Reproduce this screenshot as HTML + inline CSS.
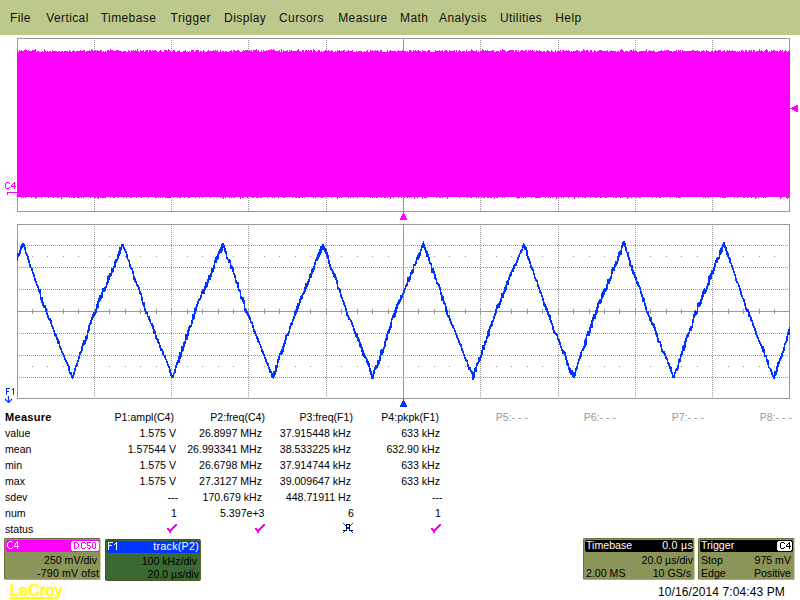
<!DOCTYPE html><html><head><meta charset="utf-8"><style>
html,body{margin:0;padding:0;width:800px;height:600px;overflow:hidden;background:#fff;position:relative;font-family:"Liberation Sans",sans-serif}
.menu{position:absolute;left:0;top:0;width:800px;height:35px;background:#bdc98c}
.m{position:absolute;top:11px;font-size:12px;line-height:14px;color:#111;letter-spacing:0.4px}
.t{position:absolute;font-size:10.6px;line-height:14px;color:#000;white-space:nowrap}
.b{font-weight:bold;font-size:11px;letter-spacing:0.3px}
.g{color:#999}
.hd{position:absolute;border-radius:2px;height:12px}
.bt{position:absolute;font-size:10.6px;line-height:12px;white-space:nowrap}
.sm{position:absolute;font-size:9.6px;line-height:10px;white-space:nowrap;letter-spacing:0.4px;transform:scaleX(0.86);transform-origin:0 0}
</style></head><body>
<div class="menu"><span class="m" style="left:10.0px">File</span><span class="m" style="left:46.2px">Vertical</span><span class="m" style="left:100.8px">Timebase</span><span class="m" style="left:170.6px">Trigger</span><span class="m" style="left:224.1px">Display</span><span class="m" style="left:279.0px">Cursors</span><span class="m" style="left:338.2px">Measure</span><span class="m" style="left:400.0px">Math</span><span class="m" style="left:439.0px">Analysis</span><span class="m" style="left:500.0px">Utilities</span><span class="m" style="left:555.3px">Help</span></div>
<svg width="800" height="600" style="position:absolute;left:0;top:0" shape-rendering="crispEdges"><rect x="17" y="38" width="773" height="1" fill="#9a979c"/><rect x="17" y="211" width="773" height="1" fill="#9a979c"/><rect x="17" y="38" width="1" height="174" fill="#9a979c"/><rect x="789" y="38" width="1" height="174" fill="#9a979c"/><line x1="94.5" y1="40" x2="94.5" y2="211" stroke="#9a979c" stroke-width="1" stroke-dasharray="1 1"/><line x1="171.5" y1="40" x2="171.5" y2="211" stroke="#9a979c" stroke-width="1" stroke-dasharray="1 1"/><line x1="248.5" y1="40" x2="248.5" y2="211" stroke="#9a979c" stroke-width="1" stroke-dasharray="1 1"/><line x1="326.5" y1="40" x2="326.5" y2="211" stroke="#9a979c" stroke-width="1" stroke-dasharray="1 1"/><rect x="403" y="38" width="1" height="173" fill="#9a979c"/><line x1="480.5" y1="40" x2="480.5" y2="211" stroke="#9a979c" stroke-width="1" stroke-dasharray="1 1"/><line x1="558.5" y1="40" x2="558.5" y2="211" stroke="#9a979c" stroke-width="1" stroke-dasharray="1 1"/><line x1="635.5" y1="40" x2="635.5" y2="211" stroke="#9a979c" stroke-width="1" stroke-dasharray="1 1"/><line x1="712.5" y1="40" x2="712.5" y2="211" stroke="#9a979c" stroke-width="1" stroke-dasharray="1 1"/><rect x="32" y="122" width="1" height="5" fill="#9a979c"/><rect x="47" y="122" width="1" height="5" fill="#9a979c"/><rect x="63" y="122" width="1" height="5" fill="#9a979c"/><rect x="78" y="122" width="1" height="5" fill="#9a979c"/><rect x="94" y="121" width="1" height="7" fill="#9a979c"/><rect x="109" y="122" width="1" height="5" fill="#9a979c"/><rect x="125" y="122" width="1" height="5" fill="#9a979c"/><rect x="140" y="122" width="1" height="5" fill="#9a979c"/><rect x="156" y="122" width="1" height="5" fill="#9a979c"/><rect x="171" y="121" width="1" height="7" fill="#9a979c"/><rect x="187" y="122" width="1" height="5" fill="#9a979c"/><rect x="202" y="122" width="1" height="5" fill="#9a979c"/><rect x="218" y="122" width="1" height="5" fill="#9a979c"/><rect x="233" y="122" width="1" height="5" fill="#9a979c"/><rect x="248" y="121" width="1" height="7" fill="#9a979c"/><rect x="264" y="122" width="1" height="5" fill="#9a979c"/><rect x="279" y="122" width="1" height="5" fill="#9a979c"/><rect x="295" y="122" width="1" height="5" fill="#9a979c"/><rect x="310" y="122" width="1" height="5" fill="#9a979c"/><rect x="326" y="121" width="1" height="7" fill="#9a979c"/><rect x="341" y="122" width="1" height="5" fill="#9a979c"/><rect x="357" y="122" width="1" height="5" fill="#9a979c"/><rect x="372" y="122" width="1" height="5" fill="#9a979c"/><rect x="388" y="122" width="1" height="5" fill="#9a979c"/><rect x="403" y="121" width="1" height="7" fill="#9a979c"/><rect x="418" y="122" width="1" height="5" fill="#9a979c"/><rect x="434" y="122" width="1" height="5" fill="#9a979c"/><rect x="449" y="122" width="1" height="5" fill="#9a979c"/><rect x="465" y="122" width="1" height="5" fill="#9a979c"/><rect x="480" y="121" width="1" height="7" fill="#9a979c"/><rect x="496" y="122" width="1" height="5" fill="#9a979c"/><rect x="511" y="122" width="1" height="5" fill="#9a979c"/><rect x="527" y="122" width="1" height="5" fill="#9a979c"/><rect x="542" y="122" width="1" height="5" fill="#9a979c"/><rect x="558" y="121" width="1" height="7" fill="#9a979c"/><rect x="573" y="122" width="1" height="5" fill="#9a979c"/><rect x="589" y="122" width="1" height="5" fill="#9a979c"/><rect x="604" y="122" width="1" height="5" fill="#9a979c"/><rect x="619" y="122" width="1" height="5" fill="#9a979c"/><rect x="635" y="121" width="1" height="7" fill="#9a979c"/><rect x="650" y="122" width="1" height="5" fill="#9a979c"/><rect x="666" y="122" width="1" height="5" fill="#9a979c"/><rect x="681" y="122" width="1" height="5" fill="#9a979c"/><rect x="697" y="122" width="1" height="5" fill="#9a979c"/><rect x="712" y="121" width="1" height="7" fill="#9a979c"/><rect x="728" y="122" width="1" height="5" fill="#9a979c"/><rect x="743" y="122" width="1" height="5" fill="#9a979c"/><rect x="759" y="122" width="1" height="5" fill="#9a979c"/><rect x="774" y="122" width="1" height="5" fill="#9a979c"/><rect x="17" y="224" width="773" height="1" fill="#9a979c"/><rect x="17" y="398" width="773" height="1" fill="#9a979c"/><rect x="17" y="224" width="1" height="175" fill="#9a979c"/><rect x="789" y="224" width="1" height="175" fill="#9a979c"/><line x1="94.5" y1="226" x2="94.5" y2="398" stroke="#9a979c" stroke-width="1" stroke-dasharray="1 1"/><line x1="171.5" y1="226" x2="171.5" y2="398" stroke="#9a979c" stroke-width="1" stroke-dasharray="1 1"/><line x1="248.5" y1="226" x2="248.5" y2="398" stroke="#9a979c" stroke-width="1" stroke-dasharray="1 1"/><line x1="326.5" y1="226" x2="326.5" y2="398" stroke="#9a979c" stroke-width="1" stroke-dasharray="1 1"/><rect x="403" y="224" width="1" height="174" fill="#9a979c"/><line x1="480.5" y1="226" x2="480.5" y2="398" stroke="#9a979c" stroke-width="1" stroke-dasharray="1 1"/><line x1="558.5" y1="226" x2="558.5" y2="398" stroke="#9a979c" stroke-width="1" stroke-dasharray="1 1"/><line x1="635.5" y1="226" x2="635.5" y2="398" stroke="#9a979c" stroke-width="1" stroke-dasharray="1 1"/><line x1="712.5" y1="226" x2="712.5" y2="398" stroke="#9a979c" stroke-width="1" stroke-dasharray="1 1"/><line x1="19" y1="245.5" x2="789" y2="245.5" stroke="#9a979c" stroke-width="1" stroke-dasharray="1 1"/><line x1="19" y1="267.5" x2="789" y2="267.5" stroke="#9a979c" stroke-width="1" stroke-dasharray="1 1"/><line x1="19" y1="289.5" x2="789" y2="289.5" stroke="#9a979c" stroke-width="1" stroke-dasharray="1 1"/><rect x="17" y="311" width="772" height="1" fill="#9a979c"/><line x1="19" y1="333.5" x2="789" y2="333.5" stroke="#9a979c" stroke-width="1" stroke-dasharray="1 1"/><line x1="19" y1="355.5" x2="789" y2="355.5" stroke="#9a979c" stroke-width="1" stroke-dasharray="1 1"/><line x1="19" y1="377.5" x2="789" y2="377.5" stroke="#9a979c" stroke-width="1" stroke-dasharray="1 1"/><rect x="32" y="309" width="1" height="5" fill="#9a979c"/><rect x="47" y="309" width="1" height="5" fill="#9a979c"/><rect x="63" y="309" width="1" height="5" fill="#9a979c"/><rect x="78" y="309" width="1" height="5" fill="#9a979c"/><rect x="94" y="308" width="1" height="7" fill="#9a979c"/><rect x="109" y="309" width="1" height="5" fill="#9a979c"/><rect x="125" y="309" width="1" height="5" fill="#9a979c"/><rect x="140" y="309" width="1" height="5" fill="#9a979c"/><rect x="156" y="309" width="1" height="5" fill="#9a979c"/><rect x="171" y="308" width="1" height="7" fill="#9a979c"/><rect x="187" y="309" width="1" height="5" fill="#9a979c"/><rect x="202" y="309" width="1" height="5" fill="#9a979c"/><rect x="218" y="309" width="1" height="5" fill="#9a979c"/><rect x="233" y="309" width="1" height="5" fill="#9a979c"/><rect x="248" y="308" width="1" height="7" fill="#9a979c"/><rect x="264" y="309" width="1" height="5" fill="#9a979c"/><rect x="279" y="309" width="1" height="5" fill="#9a979c"/><rect x="295" y="309" width="1" height="5" fill="#9a979c"/><rect x="310" y="309" width="1" height="5" fill="#9a979c"/><rect x="326" y="308" width="1" height="7" fill="#9a979c"/><rect x="341" y="309" width="1" height="5" fill="#9a979c"/><rect x="357" y="309" width="1" height="5" fill="#9a979c"/><rect x="372" y="309" width="1" height="5" fill="#9a979c"/><rect x="388" y="309" width="1" height="5" fill="#9a979c"/><rect x="403" y="308" width="1" height="7" fill="#9a979c"/><rect x="418" y="309" width="1" height="5" fill="#9a979c"/><rect x="434" y="309" width="1" height="5" fill="#9a979c"/><rect x="449" y="309" width="1" height="5" fill="#9a979c"/><rect x="465" y="309" width="1" height="5" fill="#9a979c"/><rect x="480" y="308" width="1" height="7" fill="#9a979c"/><rect x="496" y="309" width="1" height="5" fill="#9a979c"/><rect x="511" y="309" width="1" height="5" fill="#9a979c"/><rect x="527" y="309" width="1" height="5" fill="#9a979c"/><rect x="542" y="309" width="1" height="5" fill="#9a979c"/><rect x="558" y="308" width="1" height="7" fill="#9a979c"/><rect x="573" y="309" width="1" height="5" fill="#9a979c"/><rect x="589" y="309" width="1" height="5" fill="#9a979c"/><rect x="604" y="309" width="1" height="5" fill="#9a979c"/><rect x="619" y="309" width="1" height="5" fill="#9a979c"/><rect x="635" y="308" width="1" height="7" fill="#9a979c"/><rect x="650" y="309" width="1" height="5" fill="#9a979c"/><rect x="666" y="309" width="1" height="5" fill="#9a979c"/><rect x="681" y="309" width="1" height="5" fill="#9a979c"/><rect x="697" y="309" width="1" height="5" fill="#9a979c"/><rect x="712" y="308" width="1" height="7" fill="#9a979c"/><rect x="728" y="309" width="1" height="5" fill="#9a979c"/><rect x="743" y="309" width="1" height="5" fill="#9a979c"/><rect x="759" y="309" width="1" height="5" fill="#9a979c"/><rect x="774" y="309" width="1" height="5" fill="#9a979c"/><rect x="32" y="256" width="1" height="1" fill="#9a979c"/><rect x="47" y="256" width="1" height="1" fill="#9a979c"/><rect x="63" y="256" width="1" height="1" fill="#9a979c"/><rect x="78" y="256" width="1" height="1" fill="#9a979c"/><rect x="109" y="256" width="1" height="1" fill="#9a979c"/><rect x="125" y="256" width="1" height="1" fill="#9a979c"/><rect x="140" y="256" width="1" height="1" fill="#9a979c"/><rect x="156" y="256" width="1" height="1" fill="#9a979c"/><rect x="187" y="256" width="1" height="1" fill="#9a979c"/><rect x="202" y="256" width="1" height="1" fill="#9a979c"/><rect x="218" y="256" width="1" height="1" fill="#9a979c"/><rect x="233" y="256" width="1" height="1" fill="#9a979c"/><rect x="264" y="256" width="1" height="1" fill="#9a979c"/><rect x="279" y="256" width="1" height="1" fill="#9a979c"/><rect x="295" y="256" width="1" height="1" fill="#9a979c"/><rect x="310" y="256" width="1" height="1" fill="#9a979c"/><rect x="341" y="256" width="1" height="1" fill="#9a979c"/><rect x="357" y="256" width="1" height="1" fill="#9a979c"/><rect x="372" y="256" width="1" height="1" fill="#9a979c"/><rect x="388" y="256" width="1" height="1" fill="#9a979c"/><rect x="418" y="256" width="1" height="1" fill="#9a979c"/><rect x="434" y="256" width="1" height="1" fill="#9a979c"/><rect x="449" y="256" width="1" height="1" fill="#9a979c"/><rect x="465" y="256" width="1" height="1" fill="#9a979c"/><rect x="496" y="256" width="1" height="1" fill="#9a979c"/><rect x="511" y="256" width="1" height="1" fill="#9a979c"/><rect x="527" y="256" width="1" height="1" fill="#9a979c"/><rect x="542" y="256" width="1" height="1" fill="#9a979c"/><rect x="573" y="256" width="1" height="1" fill="#9a979c"/><rect x="589" y="256" width="1" height="1" fill="#9a979c"/><rect x="604" y="256" width="1" height="1" fill="#9a979c"/><rect x="619" y="256" width="1" height="1" fill="#9a979c"/><rect x="650" y="256" width="1" height="1" fill="#9a979c"/><rect x="666" y="256" width="1" height="1" fill="#9a979c"/><rect x="681" y="256" width="1" height="1" fill="#9a979c"/><rect x="697" y="256" width="1" height="1" fill="#9a979c"/><rect x="728" y="256" width="1" height="1" fill="#9a979c"/><rect x="743" y="256" width="1" height="1" fill="#9a979c"/><rect x="759" y="256" width="1" height="1" fill="#9a979c"/><rect x="774" y="256" width="1" height="1" fill="#9a979c"/><rect x="32" y="366" width="1" height="1" fill="#9a979c"/><rect x="47" y="366" width="1" height="1" fill="#9a979c"/><rect x="63" y="366" width="1" height="1" fill="#9a979c"/><rect x="78" y="366" width="1" height="1" fill="#9a979c"/><rect x="109" y="366" width="1" height="1" fill="#9a979c"/><rect x="125" y="366" width="1" height="1" fill="#9a979c"/><rect x="140" y="366" width="1" height="1" fill="#9a979c"/><rect x="156" y="366" width="1" height="1" fill="#9a979c"/><rect x="187" y="366" width="1" height="1" fill="#9a979c"/><rect x="202" y="366" width="1" height="1" fill="#9a979c"/><rect x="218" y="366" width="1" height="1" fill="#9a979c"/><rect x="233" y="366" width="1" height="1" fill="#9a979c"/><rect x="264" y="366" width="1" height="1" fill="#9a979c"/><rect x="279" y="366" width="1" height="1" fill="#9a979c"/><rect x="295" y="366" width="1" height="1" fill="#9a979c"/><rect x="310" y="366" width="1" height="1" fill="#9a979c"/><rect x="341" y="366" width="1" height="1" fill="#9a979c"/><rect x="357" y="366" width="1" height="1" fill="#9a979c"/><rect x="372" y="366" width="1" height="1" fill="#9a979c"/><rect x="388" y="366" width="1" height="1" fill="#9a979c"/><rect x="418" y="366" width="1" height="1" fill="#9a979c"/><rect x="434" y="366" width="1" height="1" fill="#9a979c"/><rect x="449" y="366" width="1" height="1" fill="#9a979c"/><rect x="465" y="366" width="1" height="1" fill="#9a979c"/><rect x="496" y="366" width="1" height="1" fill="#9a979c"/><rect x="511" y="366" width="1" height="1" fill="#9a979c"/><rect x="527" y="366" width="1" height="1" fill="#9a979c"/><rect x="542" y="366" width="1" height="1" fill="#9a979c"/><rect x="573" y="366" width="1" height="1" fill="#9a979c"/><rect x="589" y="366" width="1" height="1" fill="#9a979c"/><rect x="604" y="366" width="1" height="1" fill="#9a979c"/><rect x="619" y="366" width="1" height="1" fill="#9a979c"/><rect x="650" y="366" width="1" height="1" fill="#9a979c"/><rect x="666" y="366" width="1" height="1" fill="#9a979c"/><rect x="681" y="366" width="1" height="1" fill="#9a979c"/><rect x="697" y="366" width="1" height="1" fill="#9a979c"/><rect x="728" y="366" width="1" height="1" fill="#9a979c"/><rect x="743" y="366" width="1" height="1" fill="#9a979c"/><rect x="759" y="366" width="1" height="1" fill="#9a979c"/><rect x="774" y="366" width="1" height="1" fill="#9a979c"/><path d="M17 50h1V197h-1zM18 52h1V197h-1zM19 50h1V197h-1zM20 51h1V197h-1zM21 50h1V198h-1zM22 51h1V197h-1zM23 51h1V198h-1zM24 50h1V197h-1zM25 49h1V198h-1zM26 50h1V197h-1zM27 51h1V197h-1zM28 50h1V197h-1zM29 51h1V197h-1zM30 51h1V197h-1zM31 51h1V198h-1zM32 50h1V197h-1zM33 50h1V197h-1zM34 50h1V197h-1zM35 49h1V199h-1zM36 52h1V198h-1zM37 51h1V197h-1zM38 51h1V197h-1zM39 52h1V197h-1zM40 52h1V197h-1zM41 52h1V198h-1zM42 51h1V197h-1zM43 52h1V197h-1zM44 49h1V197h-1zM45 51h1V197h-1zM46 52h1V197h-1zM47 51h1V197h-1zM48 52h1V198h-1zM49 51h1V197h-1zM50 51h1V197h-1zM51 52h1V197h-1zM52 50h1V197h-1zM53 51h1V198h-1zM54 51h1V197h-1zM55 51h1V197h-1zM56 51h1V197h-1zM57 52h1V198h-1zM58 51h1V198h-1zM59 51h1V197h-1zM60 52h1V197h-1zM61 51h1V199h-1zM62 51h1V197h-1zM63 52h1V197h-1zM64 51h1V197h-1zM65 51h1V197h-1zM66 51h1V197h-1zM67 51h1V197h-1zM68 52h1V197h-1zM69 50h1V198h-1zM70 51h1V197h-1zM71 52h1V198h-1zM72 51h1V197h-1zM73 50h1V198h-1zM74 51h1V198h-1zM75 52h1V197h-1zM76 51h1V197h-1zM77 51h1V198h-1zM78 51h1V198h-1zM79 51h1V198h-1zM80 50h1V197h-1zM81 51h1V198h-1zM82 51h1V197h-1zM83 50h1V198h-1zM84 50h1V197h-1zM85 52h1V197h-1zM86 51h1V197h-1zM87 51h1V197h-1zM88 51h1V197h-1zM89 50h1V197h-1zM90 51h1V198h-1zM91 49h1V197h-1zM92 50h1V197h-1zM93 51h1V197h-1zM94 51h1V198h-1zM95 50h1V198h-1zM96 51h1V197h-1zM97 50h1V198h-1zM98 51h1V199h-1zM99 51h1V197h-1zM100 50h1V198h-1zM101 50h1V198h-1zM102 52h1V198h-1zM103 51h1V198h-1zM104 52h1V198h-1zM105 51h1V198h-1zM106 52h1V197h-1zM107 50h1V197h-1zM108 50h1V197h-1zM109 51h1V197h-1zM110 49h1V198h-1zM111 50h1V197h-1zM112 50h1V197h-1zM113 51h1V198h-1zM114 51h1V198h-1zM115 51h1V197h-1zM116 50h1V197h-1zM117 50h1V197h-1zM118 50h1V198h-1zM119 51h1V197h-1zM120 51h1V197h-1zM121 51h1V197h-1zM122 52h1V197h-1zM123 51h1V198h-1zM124 51h1V197h-1zM125 51h1V197h-1zM126 52h1V198h-1zM127 52h1V197h-1zM128 50h1V197h-1zM129 51h1V197h-1zM130 52h1V198h-1zM131 50h1V198h-1zM132 51h1V197h-1zM133 50h1V197h-1zM134 51h1V197h-1zM135 50h1V197h-1zM136 51h1V198h-1zM137 49h1V197h-1zM138 51h1V197h-1zM139 52h1V197h-1zM140 50h1V197h-1zM141 51h1V198h-1zM142 51h1V197h-1zM143 50h1V197h-1zM144 52h1V197h-1zM145 51h1V197h-1zM146 50h1V197h-1zM147 50h1V197h-1zM148 52h1V198h-1zM149 50h1V197h-1zM150 50h1V197h-1zM151 51h1V197h-1zM152 50h1V197h-1zM153 51h1V197h-1zM154 50h1V197h-1zM155 50h1V198h-1zM156 51h1V198h-1zM157 52h1V197h-1zM158 52h1V198h-1zM159 51h1V197h-1zM160 50h1V198h-1zM161 51h1V197h-1zM162 52h1V198h-1zM163 52h1V197h-1zM164 50h1V197h-1zM165 50h1V198h-1zM166 50h1V198h-1zM167 51h1V198h-1zM168 49h1V198h-1zM169 50h1V198h-1zM170 51h1V198h-1zM171 52h1V197h-1zM172 51h1V197h-1zM173 50h1V198h-1zM174 50h1V197h-1zM175 52h1V197h-1zM176 52h1V197h-1zM177 51h1V198h-1zM178 51h1V197h-1zM179 50h1V198h-1zM180 52h1V198h-1zM181 52h1V197h-1zM182 52h1V197h-1zM183 51h1V197h-1zM184 51h1V198h-1zM185 50h1V197h-1zM186 52h1V197h-1zM187 51h1V197h-1zM188 52h1V198h-1zM189 51h1V198h-1zM190 52h1V197h-1zM191 50h1V197h-1zM192 50h1V197h-1zM193 50h1V197h-1zM194 52h1V197h-1zM195 51h1V198h-1zM196 50h1V197h-1zM197 50h1V197h-1zM198 50h1V197h-1zM199 52h1V198h-1zM200 51h1V197h-1zM201 51h1V197h-1zM202 52h1V198h-1zM203 50h1V197h-1zM204 51h1V197h-1zM205 52h1V197h-1zM206 52h1V197h-1zM207 51h1V197h-1zM208 50h1V197h-1zM209 51h1V197h-1zM210 51h1V198h-1zM211 51h1V197h-1zM212 51h1V197h-1zM213 50h1V197h-1zM214 51h1V197h-1zM215 50h1V197h-1zM216 51h1V197h-1zM217 50h1V197h-1zM218 52h1V197h-1zM219 52h1V197h-1zM220 50h1V198h-1zM221 52h1V197h-1zM222 51h1V198h-1zM223 51h1V199h-1zM224 52h1V197h-1zM225 51h1V198h-1zM226 51h1V197h-1zM227 52h1V197h-1zM228 52h1V197h-1zM229 51h1V198h-1zM230 51h1V197h-1zM231 50h1V198h-1zM232 52h1V197h-1zM233 50h1V198h-1zM234 50h1V198h-1zM235 51h1V197h-1zM236 51h1V197h-1zM237 50h1V197h-1zM238 50h1V197h-1zM239 51h1V197h-1zM240 52h1V199h-1zM241 52h1V197h-1zM242 51h1V198h-1zM243 50h1V198h-1zM244 51h1V197h-1zM245 50h1V197h-1zM246 50h1V197h-1zM247 50h1V198h-1zM248 51h1V197h-1zM249 50h1V197h-1zM250 51h1V197h-1zM251 50h1V197h-1zM252 52h1V198h-1zM253 50h1V198h-1zM254 50h1V197h-1zM255 50h1V197h-1zM256 49h1V198h-1zM257 51h1V198h-1zM258 50h1V198h-1zM259 52h1V197h-1zM260 52h1V198h-1zM261 50h1V198h-1zM262 52h1V197h-1zM263 50h1V197h-1zM264 51h1V197h-1zM265 51h1V197h-1zM266 50h1V197h-1zM267 51h1V198h-1zM268 50h1V197h-1zM269 50h1V197h-1zM270 50h1V197h-1zM271 49h1V197h-1zM272 50h1V198h-1zM273 49h1V197h-1zM274 50h1V198h-1zM275 51h1V197h-1zM276 51h1V197h-1zM277 51h1V197h-1zM278 51h1V198h-1zM279 50h1V197h-1zM280 52h1V197h-1zM281 49h1V197h-1zM282 52h1V197h-1zM283 50h1V198h-1zM284 51h1V198h-1zM285 51h1V197h-1zM286 51h1V197h-1zM287 50h1V197h-1zM288 52h1V197h-1zM289 50h1V197h-1zM290 51h1V197h-1zM291 50h1V197h-1zM292 51h1V198h-1zM293 51h1V197h-1zM294 51h1V197h-1zM295 51h1V198h-1zM296 51h1V198h-1zM297 50h1V197h-1zM298 49h1V198h-1zM299 51h1V198h-1zM300 51h1V197h-1zM301 52h1V197h-1zM302 50h1V198h-1zM303 50h1V197h-1zM304 52h1V198h-1zM305 50h1V197h-1zM306 50h1V197h-1zM307 51h1V197h-1zM308 50h1V197h-1zM309 51h1V197h-1zM310 50h1V197h-1zM311 50h1V197h-1zM312 52h1V197h-1zM313 49h1V198h-1zM314 50h1V197h-1zM315 51h1V198h-1zM316 52h1V197h-1zM317 51h1V197h-1zM318 50h1V197h-1zM319 50h1V197h-1zM320 52h1V197h-1zM321 51h1V198h-1zM322 52h1V198h-1zM323 51h1V197h-1zM324 51h1V197h-1zM325 50h1V197h-1zM326 50h1V197h-1zM327 51h1V197h-1zM328 50h1V197h-1zM329 51h1V197h-1zM330 51h1V197h-1zM331 50h1V198h-1zM332 51h1V197h-1zM333 52h1V197h-1zM334 52h1V197h-1zM335 51h1V197h-1zM336 52h1V197h-1zM337 50h1V199h-1zM338 51h1V197h-1zM339 50h1V198h-1zM340 51h1V197h-1zM341 51h1V198h-1zM342 51h1V197h-1zM343 50h1V197h-1zM344 50h1V197h-1zM345 52h1V197h-1zM346 51h1V197h-1zM347 51h1V197h-1zM348 50h1V198h-1zM349 51h1V197h-1zM350 51h1V198h-1zM351 51h1V197h-1zM352 50h1V197h-1zM353 52h1V198h-1zM354 52h1V197h-1zM355 52h1V197h-1zM356 51h1V197h-1zM357 52h1V198h-1zM358 51h1V197h-1zM359 51h1V197h-1zM360 51h1V197h-1zM361 51h1V197h-1zM362 52h1V197h-1zM363 52h1V197h-1zM364 51h1V198h-1zM365 52h1V197h-1zM366 51h1V197h-1zM367 50h1V197h-1zM368 52h1V197h-1zM369 52h1V197h-1zM370 50h1V198h-1zM371 51h1V197h-1zM372 50h1V198h-1zM373 51h1V197h-1zM374 51h1V198h-1zM375 50h1V197h-1zM376 51h1V198h-1zM377 50h1V198h-1zM378 51h1V197h-1zM379 52h1V197h-1zM380 50h1V197h-1zM381 50h1V198h-1zM382 52h1V197h-1zM383 52h1V197h-1zM384 52h1V198h-1zM385 52h1V198h-1zM386 52h1V197h-1zM387 50h1V198h-1zM388 52h1V197h-1zM389 51h1V197h-1zM390 50h1V199h-1zM391 51h1V197h-1zM392 51h1V197h-1zM393 51h1V198h-1zM394 51h1V197h-1zM395 51h1V197h-1zM396 52h1V197h-1zM397 51h1V197h-1zM398 50h1V198h-1zM399 51h1V197h-1zM400 51h1V197h-1zM401 51h1V198h-1zM402 50h1V197h-1zM403 51h1V197h-1zM404 51h1V198h-1zM405 51h1V197h-1zM406 52h1V197h-1zM407 51h1V198h-1zM408 52h1V197h-1zM409 50h1V198h-1zM410 50h1V197h-1zM411 51h1V198h-1zM412 52h1V197h-1zM413 50h1V197h-1zM414 51h1V199h-1zM415 50h1V197h-1zM416 51h1V197h-1zM417 51h1V198h-1zM418 50h1V197h-1zM419 51h1V197h-1zM420 51h1V197h-1zM421 52h1V197h-1zM422 50h1V199h-1zM423 51h1V197h-1zM424 51h1V198h-1zM425 51h1V198h-1zM426 52h1V198h-1zM427 51h1V197h-1zM428 50h1V197h-1zM429 50h1V197h-1zM430 52h1V197h-1zM431 52h1V197h-1zM432 52h1V197h-1zM433 52h1V197h-1zM434 52h1V197h-1zM435 50h1V197h-1zM436 51h1V198h-1zM437 51h1V197h-1zM438 51h1V197h-1zM439 50h1V198h-1zM440 51h1V198h-1zM441 51h1V197h-1zM442 50h1V198h-1zM443 52h1V197h-1zM444 51h1V197h-1zM445 50h1V197h-1zM446 50h1V197h-1zM447 51h1V199h-1zM448 52h1V197h-1zM449 50h1V197h-1zM450 51h1V197h-1zM451 51h1V197h-1zM452 51h1V197h-1zM453 51h1V197h-1zM454 50h1V197h-1zM455 52h1V197h-1zM456 50h1V197h-1zM457 52h1V197h-1zM458 51h1V197h-1zM459 50h1V198h-1zM460 51h1V197h-1zM461 52h1V197h-1zM462 51h1V197h-1zM463 51h1V197h-1zM464 51h1V197h-1zM465 52h1V197h-1zM466 50h1V197h-1zM467 52h1V198h-1zM468 51h1V197h-1zM469 51h1V197h-1zM470 51h1V198h-1zM471 49h1V198h-1zM472 50h1V197h-1zM473 51h1V197h-1zM474 51h1V197h-1zM475 51h1V197h-1zM476 50h1V198h-1zM477 52h1V197h-1zM478 51h1V198h-1zM479 52h1V197h-1zM480 51h1V197h-1zM481 51h1V198h-1zM482 49h1V197h-1zM483 50h1V198h-1zM484 51h1V198h-1zM485 50h1V197h-1zM486 51h1V197h-1zM487 50h1V198h-1zM488 51h1V198h-1zM489 51h1V197h-1zM490 51h1V198h-1zM491 51h1V198h-1zM492 50h1V197h-1zM493 50h1V197h-1zM494 52h1V199h-1zM495 52h1V197h-1zM496 51h1V198h-1zM497 51h1V198h-1zM498 51h1V197h-1zM499 52h1V197h-1zM500 50h1V197h-1zM501 51h1V197h-1zM502 49h1V198h-1zM503 50h1V197h-1zM504 50h1V198h-1zM505 51h1V197h-1zM506 52h1V197h-1zM507 51h1V197h-1zM508 51h1V197h-1zM509 50h1V197h-1zM510 50h1V197h-1zM511 50h1V197h-1zM512 50h1V197h-1zM513 50h1V197h-1zM514 52h1V197h-1zM515 50h1V197h-1zM516 50h1V198h-1zM517 52h1V198h-1zM518 50h1V199h-1zM519 52h1V198h-1zM520 51h1V197h-1zM521 50h1V198h-1zM522 50h1V197h-1zM523 51h1V198h-1zM524 51h1V197h-1zM525 50h1V198h-1zM526 50h1V197h-1zM527 52h1V197h-1zM528 50h1V197h-1zM529 51h1V197h-1zM530 50h1V197h-1zM531 51h1V198h-1zM532 50h1V197h-1zM533 51h1V197h-1zM534 51h1V197h-1zM535 52h1V198h-1zM536 50h1V198h-1zM537 51h1V198h-1zM538 51h1V198h-1zM539 50h1V198h-1zM540 51h1V198h-1zM541 51h1V197h-1zM542 52h1V197h-1zM543 51h1V197h-1zM544 51h1V197h-1zM545 52h1V198h-1zM546 51h1V197h-1zM547 50h1V197h-1zM548 51h1V198h-1zM549 51h1V197h-1zM550 52h1V198h-1zM551 50h1V197h-1zM552 51h1V198h-1zM553 52h1V197h-1zM554 52h1V197h-1zM555 50h1V197h-1zM556 52h1V199h-1zM557 51h1V197h-1zM558 51h1V198h-1zM559 51h1V197h-1zM560 50h1V197h-1zM561 52h1V198h-1zM562 50h1V197h-1zM563 50h1V198h-1zM564 51h1V197h-1zM565 51h1V197h-1zM566 50h1V197h-1zM567 51h1V197h-1zM568 50h1V198h-1zM569 51h1V197h-1zM570 52h1V197h-1zM571 51h1V197h-1zM572 52h1V197h-1zM573 51h1V197h-1zM574 51h1V199h-1zM575 51h1V197h-1zM576 50h1V197h-1zM577 50h1V197h-1zM578 51h1V198h-1zM579 51h1V197h-1zM580 52h1V197h-1zM581 51h1V197h-1zM582 51h1V198h-1zM583 49h1V197h-1zM584 50h1V198h-1zM585 51h1V198h-1zM586 50h1V197h-1zM587 50h1V197h-1zM588 51h1V197h-1zM589 52h1V197h-1zM590 50h1V198h-1zM591 50h1V197h-1zM592 52h1V197h-1zM593 52h1V197h-1zM594 50h1V197h-1zM595 51h1V198h-1zM596 52h1V198h-1zM597 51h1V197h-1zM598 51h1V197h-1zM599 50h1V197h-1zM600 50h1V198h-1zM601 50h1V198h-1zM602 51h1V197h-1zM603 51h1V197h-1zM604 51h1V197h-1zM605 51h1V198h-1zM606 51h1V198h-1zM607 50h1V197h-1zM608 52h1V197h-1zM609 51h1V197h-1zM610 51h1V197h-1zM611 50h1V197h-1zM612 51h1V197h-1zM613 51h1V198h-1zM614 51h1V197h-1zM615 51h1V198h-1zM616 52h1V198h-1zM617 51h1V197h-1zM618 51h1V197h-1zM619 52h1V197h-1zM620 50h1V198h-1zM621 49h1V197h-1zM622 50h1V198h-1zM623 51h1V197h-1zM624 52h1V197h-1zM625 51h1V197h-1zM626 51h1V197h-1zM627 51h1V199h-1zM628 52h1V198h-1zM629 51h1V197h-1zM630 50h1V197h-1zM631 50h1V198h-1zM632 51h1V197h-1zM633 49h1V197h-1zM634 51h1V197h-1zM635 50h1V197h-1zM636 51h1V198h-1zM637 52h1V197h-1zM638 52h1V197h-1zM639 51h1V198h-1zM640 51h1V198h-1zM641 51h1V197h-1zM642 51h1V197h-1zM643 51h1V197h-1zM644 51h1V197h-1zM645 51h1V197h-1zM646 49h1V197h-1zM647 52h1V197h-1zM648 51h1V197h-1zM649 50h1V197h-1zM650 51h1V197h-1zM651 51h1V197h-1zM652 51h1V198h-1zM653 50h1V197h-1zM654 51h1V197h-1zM655 52h1V197h-1zM656 52h1V198h-1zM657 52h1V197h-1zM658 51h1V197h-1zM659 51h1V198h-1zM660 51h1V198h-1zM661 50h1V197h-1zM662 51h1V197h-1zM663 51h1V197h-1zM664 50h1V197h-1zM665 51h1V197h-1zM666 50h1V197h-1zM667 50h1V197h-1zM668 50h1V197h-1zM669 51h1V197h-1zM670 51h1V198h-1zM671 51h1V197h-1zM672 52h1V197h-1zM673 51h1V197h-1zM674 51h1V197h-1zM675 51h1V197h-1zM676 50h1V198h-1zM677 52h1V197h-1zM678 50h1V198h-1zM679 51h1V198h-1zM680 50h1V198h-1zM681 52h1V197h-1zM682 50h1V197h-1zM683 51h1V197h-1zM684 51h1V197h-1zM685 51h1V197h-1zM686 51h1V197h-1zM687 51h1V197h-1zM688 51h1V197h-1zM689 51h1V197h-1zM690 51h1V197h-1zM691 51h1V197h-1zM692 50h1V197h-1zM693 50h1V197h-1zM694 51h1V197h-1zM695 51h1V197h-1zM696 51h1V197h-1zM697 50h1V197h-1zM698 51h1V197h-1zM699 51h1V197h-1zM700 52h1V197h-1zM701 51h1V197h-1zM702 51h1V197h-1zM703 50h1V198h-1zM704 51h1V197h-1zM705 52h1V198h-1zM706 50h1V197h-1zM707 51h1V197h-1zM708 51h1V198h-1zM709 52h1V197h-1zM710 52h1V197h-1zM711 51h1V197h-1zM712 51h1V197h-1zM713 52h1V197h-1zM714 51h1V197h-1zM715 50h1V197h-1zM716 51h1V197h-1zM717 51h1V197h-1zM718 50h1V197h-1zM719 50h1V197h-1zM720 50h1V198h-1zM721 52h1V197h-1zM722 51h1V198h-1zM723 51h1V198h-1zM724 50h1V198h-1zM725 52h1V198h-1zM726 51h1V197h-1zM727 50h1V197h-1zM728 51h1V197h-1zM729 50h1V197h-1zM730 51h1V197h-1zM731 51h1V197h-1zM732 50h1V197h-1zM733 51h1V197h-1zM734 51h1V198h-1zM735 51h1V197h-1zM736 52h1V197h-1zM737 51h1V198h-1zM738 52h1V197h-1zM739 51h1V197h-1zM740 52h1V197h-1zM741 50h1V197h-1zM742 50h1V197h-1zM743 51h1V198h-1zM744 52h1V198h-1zM745 50h1V197h-1zM746 50h1V197h-1zM747 52h1V198h-1zM748 51h1V197h-1zM749 50h1V197h-1zM750 51h1V197h-1zM751 50h1V198h-1zM752 52h1V197h-1zM753 50h1V197h-1zM754 50h1V197h-1zM755 52h1V199h-1zM756 51h1V198h-1zM757 51h1V197h-1zM758 51h1V198h-1zM759 49h1V197h-1zM760 51h1V197h-1zM761 50h1V197h-1zM762 51h1V197h-1zM763 52h1V198h-1zM764 51h1V197h-1zM765 50h1V198h-1zM766 49h1V197h-1zM767 50h1V197h-1zM768 52h1V197h-1zM769 51h1V197h-1zM770 52h1V197h-1zM771 50h1V197h-1zM772 51h1V197h-1zM773 50h1V197h-1zM774 50h1V197h-1zM775 51h1V197h-1zM776 51h1V197h-1zM777 51h1V197h-1zM778 52h1V197h-1zM779 51h1V197h-1zM780 50h1V199h-1zM781 51h1V198h-1zM782 50h1V197h-1zM783 52h1V197h-1zM784 51h1V197h-1zM785 50h1V197h-1zM786 51h1V198h-1zM787 52h1V199h-1zM788 51h1V198h-1zM789 50h1V197h-1z" fill="#ff00ff"/><path d="M17 253h1V261h-1zM18 253h1V257h-1zM19 250h1V256h-1zM20 246h1V254h-1zM21 244h1V250h-1zM22 243h1V248h-1zM23 243h1V247h-1zM24 244h1V250h-1zM25 247h1V254h-1zM26 252h1V256h-1zM27 254h1V260h-1zM28 256h1V263h-1zM29 260h1V267h-1zM30 264h1V268h-1zM31 267h1V271h-1zM32 268h1V274h-1zM33 272h1V277h-1zM34 274h1V281h-1zM35 278h1V283h-1zM36 281h1V286h-1zM37 284h1V288h-1zM38 286h1V292h-1zM39 289h1V294h-1zM40 289h1V300h-1zM41 297h1V303h-1zM42 297h1V306h-1zM43 302h1V308h-1zM44 305h1V308h-1zM45 305h1V312h-1zM46 308h1V315h-1zM47 313h1V318h-1zM48 315h1V320h-1zM49 318h1V321h-1zM50 318h1V324h-1zM51 320h1V327h-1zM52 325h1V329h-1zM53 327h1V332h-1zM54 330h1V336h-1zM55 333h1V337h-1zM56 334h1V340h-1zM57 337h1V344h-1zM58 339h1V344h-1zM59 341h1V348h-1zM60 346h1V350h-1zM61 348h1V353h-1zM62 351h1V355h-1zM63 353h1V357h-1zM64 355h1V360h-1zM65 358h1V362h-1zM66 360h1V364h-1zM67 362h1V366h-1zM68 364h1V371h-1zM69 366h1V374h-1zM70 372h1V375h-1zM71 372h1V378h-1zM72 375h1V379h-1zM73 372h1V378h-1zM74 368h1V375h-1zM75 365h1V371h-1zM76 363h1V367h-1zM77 360h1V366h-1zM78 356h1V362h-1zM79 352h1V359h-1zM80 351h1V355h-1zM81 346h1V353h-1zM82 343h1V351h-1zM83 340h1V346h-1zM84 340h1V345h-1zM85 336h1V344h-1zM86 335h1V341h-1zM87 330h1V339h-1zM88 325h1V333h-1zM89 323h1V331h-1zM90 320h1V325h-1zM91 317h1V324h-1zM92 314h1V320h-1zM93 312h1V318h-1zM94 312h1V316h-1zM95 309h1V315h-1zM96 304h1V313h-1zM97 301h1V309h-1zM98 298h1V308h-1zM99 295h1V302h-1zM100 295h1V301h-1zM101 292h1V299h-1zM102 288h1V298h-1zM103 288h1V292h-1zM104 287h1V292h-1zM105 286h1V291h-1zM106 282h1V288h-1zM107 276h1V285h-1zM108 275h1V283h-1zM109 273h1V280h-1zM110 273h1V277h-1zM111 268h1V276h-1zM112 268h1V273h-1zM113 266h1V272h-1zM114 261h1V268h-1zM115 259h1V267h-1zM116 259h1V263h-1zM117 254h1V261h-1zM118 251h1V259h-1zM119 247h1V256h-1zM120 247h1V254h-1zM121 244h1V250h-1zM122 244h1V247h-1zM123 244h1V249h-1zM124 247h1V251h-1zM125 249h1V253h-1zM126 251h1V258h-1zM127 254h1V260h-1zM128 259h1V262h-1zM129 260h1V267h-1zM130 264h1V269h-1zM131 267h1V270h-1zM132 268h1V274h-1zM133 271h1V280h-1zM134 276h1V282h-1zM135 278h1V283h-1zM136 281h1V286h-1zM137 284h1V287h-1zM138 285h1V290h-1zM139 287h1V294h-1zM140 291h1V295h-1zM141 293h1V301h-1zM142 297h1V305h-1zM143 302h1V307h-1zM144 302h1V311h-1zM145 308h1V314h-1zM146 311h1V314h-1zM147 312h1V317h-1zM148 316h1V320h-1zM149 316h1V322h-1zM150 319h1V324h-1zM151 323h1V326h-1zM152 323h1V329h-1zM153 325h1V334h-1zM154 329h1V334h-1zM155 331h1V339h-1zM156 335h1V340h-1zM157 338h1V343h-1zM158 339h1V344h-1zM159 342h1V348h-1zM160 345h1V351h-1zM161 348h1V351h-1zM162 349h1V355h-1zM163 351h1V356h-1zM164 355h1V358h-1zM165 355h1V360h-1zM166 359h1V363h-1zM167 361h1V366h-1zM168 364h1V368h-1zM169 366h1V373h-1zM170 369h1V376h-1zM171 373h1V378h-1zM172 375h1V378h-1zM173 373h1V378h-1zM174 369h1V374h-1zM175 365h1V373h-1zM176 362h1V368h-1zM177 360h1V365h-1zM178 356h1V363h-1zM179 352h1V363h-1zM180 352h1V359h-1zM181 346h1V357h-1zM182 346h1V352h-1zM183 342h1V351h-1zM184 341h1V347h-1zM185 334h1V344h-1zM186 334h1V340h-1zM187 330h1V340h-1zM188 327h1V336h-1zM189 325h1V331h-1zM190 325h1V328h-1zM191 320h1V327h-1zM192 314h1V324h-1zM193 314h1V320h-1zM194 308h1V319h-1zM195 307h1V314h-1zM196 304h1V311h-1zM197 301h1V307h-1zM198 299h1V304h-1zM199 298h1V301h-1zM200 295h1V300h-1zM201 291h1V298h-1zM202 289h1V294h-1zM203 289h1V294h-1zM204 286h1V294h-1zM205 282h1V290h-1zM206 282h1V288h-1zM207 279h1V287h-1zM208 275h1V283h-1zM209 275h1V280h-1zM210 273h1V280h-1zM211 268h1V277h-1zM212 268h1V273h-1zM213 265h1V272h-1zM214 260h1V269h-1zM215 257h1V263h-1zM216 256h1V263h-1zM217 254h1V260h-1zM218 251h1V259h-1zM219 249h1V254h-1zM220 247h1V253h-1zM221 244h1V253h-1zM222 243h1V251h-1zM223 243h1V248h-1zM224 245h1V252h-1zM225 248h1V254h-1zM226 251h1V259h-1zM227 257h1V260h-1zM228 259h1V263h-1zM229 259h1V263h-1zM230 260h1V269h-1zM231 265h1V269h-1zM232 266h1V272h-1zM233 268h1V275h-1zM234 273h1V278h-1zM235 275h1V283h-1zM236 280h1V284h-1zM237 282h1V288h-1zM238 282h1V291h-1zM239 289h1V292h-1zM240 290h1V299h-1zM241 296h1V300h-1zM242 297h1V302h-1zM243 297h1V304h-1zM244 300h1V311h-1zM245 308h1V313h-1zM246 309h1V314h-1zM247 311h1V316h-1zM248 313h1V318h-1zM249 315h1V320h-1zM250 317h1V323h-1zM251 321h1V324h-1zM252 322h1V328h-1zM253 325h1V332h-1zM254 329h1V334h-1zM255 331h1V336h-1zM256 334h1V339h-1zM257 336h1V342h-1zM258 338h1V343h-1zM259 341h1V345h-1zM260 344h1V348h-1zM261 346h1V352h-1zM262 349h1V354h-1zM263 351h1V356h-1zM264 354h1V359h-1zM265 357h1V362h-1zM266 359h1V364h-1zM267 362h1V366h-1zM268 363h1V369h-1zM269 367h1V373h-1zM270 369h1V373h-1zM271 371h1V377h-1zM272 373h1V378h-1zM273 371h1V379h-1zM274 371h1V377h-1zM275 365h1V375h-1zM276 365h1V372h-1zM277 359h1V368h-1zM278 356h1V363h-1zM279 353h1V360h-1zM280 351h1V355h-1zM281 349h1V355h-1zM282 346h1V354h-1zM283 343h1V352h-1zM284 340h1V347h-1zM285 335h1V344h-1zM286 334h1V340h-1zM287 333h1V336h-1zM288 331h1V336h-1zM289 326h1V333h-1zM290 323h1V329h-1zM291 322h1V326h-1zM292 319h1V325h-1zM293 316h1V321h-1zM294 311h1V319h-1zM295 310h1V316h-1zM296 306h1V314h-1zM297 303h1V312h-1zM298 303h1V309h-1zM299 299h1V306h-1zM300 296h1V303h-1zM301 295h1V300h-1zM302 293h1V299h-1zM303 291h1V295h-1zM304 287h1V294h-1zM305 283h1V292h-1zM306 283h1V289h-1zM307 281h1V287h-1zM308 279h1V285h-1zM309 274h1V282h-1zM310 273h1V278h-1zM311 269h1V278h-1zM312 268h1V274h-1zM313 266h1V272h-1zM314 262h1V270h-1zM315 259h1V265h-1zM316 257h1V261h-1zM317 254h1V261h-1zM318 252h1V259h-1zM319 249h1V257h-1zM320 246h1V255h-1zM321 246h1V253h-1zM322 244h1V250h-1zM323 244h1V250h-1zM324 246h1V252h-1zM325 248h1V254h-1zM326 249h1V257h-1zM327 252h1V259h-1zM328 255h1V264h-1zM329 260h1V267h-1zM330 264h1V270h-1zM331 267h1V271h-1zM332 269h1V274h-1zM333 271h1V277h-1zM334 273h1V278h-1zM335 274h1V280h-1zM336 277h1V284h-1zM337 280h1V289h-1zM338 287h1V290h-1zM339 288h1V293h-1zM340 289h1V297h-1zM341 294h1V299h-1zM342 297h1V302h-1zM343 300h1V305h-1zM344 302h1V307h-1zM345 305h1V311h-1zM346 308h1V316h-1zM347 312h1V317h-1zM348 315h1V320h-1zM349 317h1V320h-1zM350 319h1V322h-1zM351 320h1V325h-1zM352 322h1V327h-1zM353 325h1V331h-1zM354 328h1V334h-1zM355 331h1V337h-1zM356 333h1V338h-1zM357 333h1V341h-1zM358 337h1V342h-1zM359 339h1V347h-1zM360 342h1V348h-1zM361 344h1V352h-1zM362 347h1V356h-1zM363 350h1V357h-1zM364 353h1V358h-1zM365 355h1V359h-1zM366 357h1V363h-1zM367 359h1V365h-1zM368 361h1V367h-1zM369 363h1V372h-1zM370 368h1V375h-1zM371 371h1V379h-1zM372 374h1V379h-1zM373 370h1V379h-1zM374 367h1V374h-1zM375 365h1V370h-1zM376 365h1V369h-1zM377 360h1V368h-1zM378 360h1V366h-1zM379 356h1V364h-1zM380 350h1V361h-1zM381 349h1V355h-1zM382 349h1V355h-1zM383 347h1V353h-1zM384 341h1V349h-1zM385 338h1V347h-1zM386 334h1V341h-1zM387 331h1V340h-1zM388 329h1V334h-1zM389 326h1V333h-1zM390 322h1V330h-1zM391 318h1V328h-1zM392 315h1V320h-1zM393 313h1V318h-1zM394 310h1V318h-1zM395 307h1V317h-1zM396 304h1V313h-1zM397 302h1V309h-1zM398 300h1V305h-1zM399 299h1V304h-1zM400 295h1V302h-1zM401 295h1V300h-1zM402 293h1V298h-1zM403 290h1V295h-1zM404 288h1V293h-1zM405 285h1V290h-1zM406 283h1V287h-1zM407 277h1V286h-1zM408 277h1V282h-1zM409 276h1V282h-1zM410 272h1V280h-1zM411 270h1V275h-1zM412 269h1V274h-1zM413 264h1V273h-1zM414 264h1V266h-1zM415 261h1V266h-1zM416 257h1V264h-1zM417 255h1V260h-1zM418 253h1V260h-1zM419 252h1V258h-1zM420 249h1V256h-1zM421 245h1V251h-1zM422 243h1V248h-1zM423 241h1V248h-1zM424 244h1V250h-1zM425 247h1V253h-1zM426 250h1V257h-1zM427 251h1V257h-1zM428 254h1V261h-1zM429 257h1V264h-1zM430 262h1V265h-1zM431 263h1V273h-1zM432 268h1V273h-1zM433 268h1V274h-1zM434 271h1V279h-1zM435 274h1V280h-1zM436 278h1V284h-1zM437 282h1V285h-1zM438 283h1V287h-1zM439 284h1V290h-1zM440 287h1V295h-1zM441 292h1V301h-1zM442 295h1V301h-1zM443 296h1V304h-1zM444 301h1V305h-1zM445 303h1V312h-1zM446 306h1V315h-1zM447 310h1V317h-1zM448 315h1V318h-1zM449 315h1V321h-1zM450 318h1V324h-1zM451 321h1V326h-1zM452 324h1V328h-1zM453 325h1V329h-1zM454 328h1V332h-1zM455 330h1V335h-1zM456 333h1V338h-1zM457 335h1V340h-1zM458 338h1V343h-1zM459 340h1V345h-1zM460 343h1V347h-1zM461 344h1V351h-1zM462 348h1V353h-1zM463 351h1V356h-1zM464 354h1V359h-1zM465 357h1V361h-1zM466 359h1V362h-1zM467 360h1V367h-1zM468 364h1V370h-1zM469 367h1V370h-1zM470 367h1V372h-1zM471 370h1V374h-1zM472 371h1V380h-1zM473 372h1V380h-1zM474 368h1V378h-1zM475 367h1V372h-1zM476 363h1V372h-1zM477 362h1V366h-1zM478 357h1V364h-1zM479 357h1V362h-1zM480 355h1V361h-1zM481 350h1V358h-1zM482 345h1V355h-1zM483 345h1V350h-1zM484 341h1V350h-1zM485 340h1V345h-1zM486 336h1V343h-1zM487 331h1V339h-1zM488 329h1V337h-1zM489 326h1V336h-1zM490 324h1V329h-1zM491 321h1V327h-1zM492 320h1V326h-1zM493 316h1V322h-1zM494 313h1V319h-1zM495 309h1V316h-1zM496 305h1V313h-1zM497 304h1V309h-1zM498 303h1V308h-1zM499 301h1V308h-1zM500 298h1V305h-1zM501 293h1V302h-1zM502 293h1V298h-1zM503 291h1V298h-1zM504 287h1V294h-1zM505 285h1V292h-1zM506 281h1V290h-1zM507 280h1V285h-1zM508 277h1V285h-1zM509 274h1V280h-1zM510 272h1V277h-1zM511 270h1V276h-1zM512 268h1V272h-1zM513 265h1V272h-1zM514 264h1V269h-1zM515 263h1V266h-1zM516 260h1V266h-1zM517 257h1V263h-1zM518 255h1V260h-1zM519 253h1V257h-1zM520 250h1V254h-1zM521 249h1V253h-1zM522 245h1V251h-1zM523 243h1V248h-1zM524 244h1V250h-1zM525 246h1V250h-1zM526 247h1V256h-1zM527 250h1V259h-1zM528 256h1V261h-1zM529 258h1V264h-1zM530 261h1V268h-1zM531 265h1V270h-1zM532 267h1V271h-1zM533 269h1V275h-1zM534 273h1V279h-1zM535 277h1V281h-1zM536 279h1V282h-1zM537 280h1V287h-1zM538 284h1V289h-1zM539 287h1V293h-1zM540 290h1V294h-1zM541 292h1V297h-1zM542 295h1V301h-1zM543 298h1V306h-1zM544 302h1V307h-1zM545 304h1V310h-1zM546 306h1V312h-1zM547 308h1V315h-1zM548 311h1V317h-1zM549 314h1V320h-1zM550 315h1V323h-1zM551 320h1V325h-1zM552 323h1V330h-1zM553 326h1V333h-1zM554 330h1V334h-1zM555 332h1V335h-1zM556 333h1V336h-1zM557 334h1V340h-1zM558 338h1V342h-1zM559 339h1V345h-1zM560 342h1V348h-1zM561 346h1V351h-1zM562 349h1V354h-1zM563 350h1V354h-1zM564 351h1V356h-1zM565 352h1V360h-1zM566 356h1V365h-1zM567 360h1V366h-1zM568 363h1V370h-1zM569 367h1V373h-1zM570 368h1V375h-1zM571 370h1V375h-1zM572 370h1V377h-1zM573 372h1V378h-1zM574 372h1V378h-1zM575 368h1V376h-1zM576 366h1V371h-1zM577 362h1V369h-1zM578 359h1V364h-1zM579 356h1V361h-1zM580 352h1V359h-1zM581 350h1V357h-1zM582 348h1V351h-1zM583 346h1V351h-1zM584 340h1V349h-1zM585 338h1V347h-1zM586 334h1V345h-1zM587 331h1V336h-1zM588 331h1V336h-1zM589 327h1V336h-1zM590 324h1V333h-1zM591 320h1V328h-1zM592 317h1V328h-1zM593 314h1V321h-1zM594 314h1V319h-1zM595 310h1V319h-1zM596 307h1V315h-1zM597 303h1V313h-1zM598 301h1V308h-1zM599 299h1V304h-1zM600 299h1V304h-1zM601 293h1V303h-1zM602 291h1V299h-1zM603 289h1V297h-1zM604 288h1V295h-1zM605 288h1V292h-1zM606 284h1V291h-1zM607 279h1V289h-1zM608 279h1V284h-1zM609 278h1V284h-1zM610 276h1V281h-1zM611 269h1V279h-1zM612 267h1V274h-1zM613 267h1V271h-1zM614 264h1V271h-1zM615 261h1V267h-1zM616 261h1V266h-1zM617 256h1V264h-1zM618 252h1V261h-1zM619 251h1V257h-1zM620 250h1V255h-1zM621 245h1V255h-1zM622 242h1V248h-1zM623 241h1V246h-1zM624 241h1V247h-1zM625 243h1V251h-1zM626 247h1V253h-1zM627 252h1V257h-1zM628 252h1V260h-1zM629 257h1V266h-1zM630 260h1V267h-1zM631 265h1V271h-1zM632 265h1V274h-1zM633 270h1V275h-1zM634 272h1V278h-1zM635 275h1V280h-1zM636 277h1V284h-1zM637 281h1V286h-1zM638 282h1V287h-1zM639 285h1V289h-1zM640 287h1V294h-1zM641 291h1V297h-1zM642 294h1V302h-1zM643 297h1V302h-1zM644 298h1V306h-1zM645 303h1V310h-1zM646 306h1V313h-1zM647 311h1V315h-1zM648 311h1V317h-1zM649 315h1V321h-1zM650 317h1V322h-1zM651 317h1V325h-1zM652 322h1V326h-1zM653 323h1V328h-1zM654 324h1V331h-1zM655 327h1V335h-1zM656 331h1V337h-1zM657 333h1V342h-1zM658 338h1V343h-1zM659 341h1V343h-1zM660 341h1V347h-1zM661 344h1V352h-1zM662 349h1V353h-1zM663 351h1V354h-1zM664 351h1V356h-1zM665 353h1V359h-1zM666 356h1V360h-1zM667 358h1V364h-1zM668 362h1V366h-1zM669 363h1V369h-1zM670 366h1V372h-1zM671 367h1V374h-1zM672 372h1V378h-1zM673 375h1V378h-1zM674 372h1V378h-1zM675 369h1V374h-1zM676 368h1V371h-1zM677 365h1V371h-1zM678 359h1V369h-1zM679 358h1V363h-1zM680 354h1V362h-1zM681 351h1V357h-1zM682 346h1V355h-1zM683 345h1V351h-1zM684 341h1V351h-1zM685 338h1V348h-1zM686 335h1V342h-1zM687 333h1V338h-1zM688 332h1V337h-1zM689 328h1V334h-1zM690 326h1V331h-1zM691 326h1V331h-1zM692 319h1V328h-1zM693 314h1V323h-1zM694 311h1V318h-1zM695 310h1V316h-1zM696 311h1V315h-1zM697 303h1V314h-1zM698 302h1V307h-1zM699 302h1V307h-1zM700 299h1V306h-1zM701 295h1V304h-1zM702 291h1V300h-1zM703 289h1V297h-1zM704 288h1V294h-1zM705 289h1V294h-1zM706 286h1V292h-1zM707 283h1V289h-1zM708 276h1V286h-1zM709 275h1V285h-1zM710 273h1V280h-1zM711 270h1V279h-1zM712 270h1V275h-1zM713 267h1V274h-1zM714 263h1V271h-1zM715 260h1V267h-1zM716 258h1V263h-1zM717 257h1V263h-1zM718 257h1V260h-1zM719 250h1V259h-1zM720 248h1V255h-1zM721 247h1V254h-1zM722 244h1V252h-1zM723 242h1V247h-1zM724 242h1V248h-1zM725 245h1V251h-1zM726 247h1V255h-1zM727 251h1V257h-1zM728 253h1V259h-1zM729 257h1V263h-1zM730 258h1V264h-1zM731 263h1V267h-1zM732 265h1V270h-1zM733 268h1V273h-1zM734 271h1V276h-1zM735 274h1V281h-1zM736 278h1V283h-1zM737 281h1V284h-1zM738 283h1V287h-1zM739 285h1V291h-1zM740 288h1V295h-1zM741 291h1V297h-1zM742 295h1V299h-1zM743 298h1V302h-1zM744 299h1V306h-1zM745 303h1V310h-1zM746 307h1V312h-1zM747 309h1V312h-1zM748 309h1V317h-1zM749 312h1V317h-1zM750 315h1V321h-1zM751 317h1V322h-1zM752 320h1V326h-1zM753 323h1V328h-1zM754 326h1V331h-1zM755 328h1V335h-1zM756 331h1V337h-1zM757 335h1V339h-1zM758 337h1V342h-1zM759 340h1V344h-1zM760 342h1V346h-1zM761 344h1V349h-1zM762 346h1V352h-1zM763 346h1V353h-1zM764 349h1V357h-1zM765 355h1V357h-1zM766 355h1V362h-1zM767 359h1V365h-1zM768 360h1V368h-1zM769 367h1V369h-1zM770 368h1V372h-1zM771 369h1V375h-1zM772 372h1V377h-1zM773 375h1V379h-1zM774 371h1V379h-1zM775 371h1V376h-1zM776 366h1V375h-1zM777 362h1V372h-1zM778 361h1V367h-1zM779 358h1V364h-1zM780 356h1V361h-1zM781 353h1V359h-1zM782 351h1V357h-1zM783 347h1V353h-1zM784 343h1V351h-1zM785 341h1V345h-1zM786 336h1V343h-1zM787 332h1V341h-1zM788 329h1V335h-1zM789 327h1V335h-1z" fill="#0033ff"/><rect x="403" y="212" width="1" height="1" fill="#ff00ff"/><rect x="403" y="213" width="1" height="1" fill="#ff00ff"/><rect x="402" y="214" width="3" height="1" fill="#ff00ff"/><rect x="402" y="215" width="3" height="1" fill="#ff00ff"/><rect x="401" y="216" width="5" height="1" fill="#ff00ff"/><rect x="401" y="217" width="5" height="1" fill="#ff00ff"/><rect x="400" y="218" width="7" height="1" fill="#ff00ff"/><rect x="400" y="219" width="7" height="1" fill="#ff00ff"/><rect x="403" y="399" width="1" height="1" fill="#0033ff"/><rect x="403" y="400" width="1" height="1" fill="#0033ff"/><rect x="402" y="401" width="3" height="1" fill="#0033ff"/><rect x="402" y="402" width="3" height="1" fill="#0033ff"/><rect x="401" y="403" width="5" height="1" fill="#0033ff"/><rect x="401" y="404" width="5" height="1" fill="#0033ff"/><rect x="400" y="405" width="7" height="1" fill="#0033ff"/><rect x="400" y="406" width="7" height="1" fill="#0033ff"/><rect x="792" y="107" width="1" height="3" fill="#ff00ff"/><rect x="793" y="107" width="1" height="3" fill="#ff00ff"/><rect x="794" y="106" width="1" height="5" fill="#ff00ff"/><rect x="795" y="106" width="1" height="5" fill="#ff00ff"/><rect x="796" y="105" width="1" height="7" fill="#ff00ff"/><rect x="797" y="105" width="1" height="7" fill="#ff00ff"/><rect x="790" y="108" width="2" height="1" fill="#ff00ff"/><rect x="7" y="192" width="10" height="1" fill="#ff00ff"/><rect x="7" y="192" width="1" height="3" fill="#ff00ff"/><rect x="6" y="182" width="3" height="1" fill="#ff00ff"/><rect x="9" y="183" width="1" height="1" fill="#ff00ff"/><rect x="5" y="183" width="1" height="5" fill="#ff00ff"/><rect x="6" y="188" width="3" height="1" fill="#ff00ff"/><rect x="9" y="187" width="1" height="1" fill="#ff00ff"/><rect x="14" y="182" width="1" height="7" fill="#ff00ff"/><rect x="11" y="186" width="5" height="1" fill="#ff00ff"/><rect x="13" y="183" width="1" height="1" fill="#ff00ff"/><rect x="12" y="184" width="1" height="1" fill="#ff00ff"/><rect x="11" y="185" width="1" height="1" fill="#ff00ff"/><rect x="6" y="388" width="1" height="7" fill="#0033ff"/><rect x="6" y="388" width="4" height="1" fill="#0033ff"/><rect x="6" y="391" width="3" height="1" fill="#0033ff"/><rect x="13" y="388" width="1" height="7" fill="#0033ff"/><rect x="12" y="389" width="1" height="1" fill="#0033ff"/><path d="M8.5 396V402.5M5 399L8.5 402.5L12 399" stroke="#0033ff" stroke-width="1.2" fill="none" shape-rendering="auto"/><rect x="175" y="524" width="2" height="1" fill="#ff00ff"/><rect x="174" y="525" width="3" height="1" fill="#ff00ff"/><rect x="173" y="526" width="3" height="1" fill="#ff00ff"/><rect x="172" y="527" width="3" height="1" fill="#ff00ff"/><rect x="167" y="528" width="2" height="1" fill="#ff00ff"/><rect x="171" y="528" width="3" height="1" fill="#ff00ff"/><rect x="167" y="529" width="6" height="1" fill="#ff00ff"/><rect x="168" y="530" width="4" height="1" fill="#ff00ff"/><rect x="169" y="531" width="2" height="1" fill="#ff00ff"/><rect x="169" y="532" width="2" height="1" fill="#ff00ff"/><rect x="263" y="524" width="2" height="1" fill="#ff00ff"/><rect x="262" y="525" width="3" height="1" fill="#ff00ff"/><rect x="261" y="526" width="3" height="1" fill="#ff00ff"/><rect x="260" y="527" width="3" height="1" fill="#ff00ff"/><rect x="255" y="528" width="2" height="1" fill="#ff00ff"/><rect x="259" y="528" width="3" height="1" fill="#ff00ff"/><rect x="255" y="529" width="6" height="1" fill="#ff00ff"/><rect x="256" y="530" width="4" height="1" fill="#ff00ff"/><rect x="257" y="531" width="2" height="1" fill="#ff00ff"/><rect x="257" y="532" width="2" height="1" fill="#ff00ff"/><rect x="439" y="524" width="2" height="1" fill="#ff00ff"/><rect x="438" y="525" width="3" height="1" fill="#ff00ff"/><rect x="437" y="526" width="3" height="1" fill="#ff00ff"/><rect x="436" y="527" width="3" height="1" fill="#ff00ff"/><rect x="431" y="528" width="2" height="1" fill="#ff00ff"/><rect x="435" y="528" width="3" height="1" fill="#ff00ff"/><rect x="431" y="529" width="6" height="1" fill="#ff00ff"/><rect x="432" y="530" width="4" height="1" fill="#ff00ff"/><rect x="433" y="531" width="2" height="1" fill="#ff00ff"/><rect x="433" y="532" width="2" height="1" fill="#ff00ff"/><rect x="346" y="524" width="4" height="1" fill="#000"/><rect x="346" y="524" width="1" height="7" fill="#000"/><rect x="349" y="524" width="1" height="7" fill="#000"/><rect x="343" y="530" width="4" height="1" fill="#000"/><rect x="349" y="530" width="4" height="1" fill="#000"/><rect x="343" y="523" width="1" height="1" fill="#0033ff"/><rect x="352" y="523" width="1" height="1" fill="#0033ff"/><rect x="344" y="524" width="1" height="1" fill="#0033ff"/><rect x="351" y="524" width="1" height="1" fill="#0033ff"/><rect x="345" y="525" width="1" height="1" fill="#0033ff"/><rect x="350" y="525" width="1" height="1" fill="#0033ff"/><rect x="346" y="526" width="1" height="1" fill="#0033ff"/><rect x="349" y="526" width="1" height="1" fill="#0033ff"/><rect x="347" y="527" width="1" height="1" fill="#0033ff"/><rect x="348" y="527" width="1" height="1" fill="#0033ff"/><rect x="348" y="528" width="1" height="1" fill="#0033ff"/><rect x="347" y="528" width="1" height="1" fill="#0033ff"/><rect x="349" y="529" width="1" height="1" fill="#0033ff"/><rect x="346" y="529" width="1" height="1" fill="#0033ff"/><rect x="350" y="530" width="1" height="1" fill="#0033ff"/><rect x="345" y="530" width="1" height="1" fill="#0033ff"/><rect x="351" y="531" width="1" height="1" fill="#0033ff"/><rect x="344" y="531" width="1" height="1" fill="#0033ff"/><rect x="352" y="532" width="1" height="1" fill="#0033ff"/><rect x="343" y="532" width="1" height="1" fill="#0033ff"/><rect x="347" y="527" width="2" height="2" fill="#0033ff"/></svg>
<div class="t b" style="left:5px;top:410px">Measure</div><div class="t" style="left:5px;top:426px">value</div><div class="t" style="left:5px;top:442px">mean</div><div class="t" style="left:5px;top:458px">min</div><div class="t" style="left:5px;top:474px">max</div><div class="t" style="left:5px;top:490px">sdev</div><div class="t" style="left:5px;top:506px">num</div><div class="t" style="left:5px;top:522px">status</div><div class="t r" style="right:626px;top:410px">P1:ampl(C4)</div><div class="t r" style="right:624px;top:426px">1.575 V</div><div class="t r" style="right:624px;top:442px">1.57544 V</div><div class="t r" style="right:624px;top:458px">1.575 V</div><div class="t r" style="right:624px;top:474px">1.575 V</div><div class="t r" style="right:622px;top:490px">---</div><div class="t r" style="right:623px;top:506px">1</div><div class="t r" style="right:535px;top:410px">P2:freq(C4)</div><div class="t r" style="right:538px;top:426px">26.8997 MHz</div><div class="t r" style="right:538px;top:442px">26.993341 MHz</div><div class="t r" style="right:538px;top:458px">26.6798 MHz</div><div class="t r" style="right:538px;top:474px">27.3127 MHz</div><div class="t r" style="right:538px;top:490px">170.679 kHz</div><div class="t r" style="right:535.5px;top:506px">5.397e+3</div><div class="t r" style="right:447px;top:410px">P3:freq(F1)</div><div class="t r" style="right:449px;top:426px">37.915448 kHz</div><div class="t r" style="right:449px;top:442px">38.533225 kHz</div><div class="t r" style="right:449px;top:458px">37.914744 kHz</div><div class="t r" style="right:449px;top:474px">39.009647 kHz</div><div class="t r" style="right:449px;top:490px">448.71911 Hz</div><div class="t r" style="right:446px;top:506px">6</div><div class="t r" style="right:361px;top:410px">P4:pkpk(F1)</div><div class="t r" style="right:360px;top:426px">633 kHz</div><div class="t r" style="right:360px;top:442px">632.90 kHz</div><div class="t r" style="right:360px;top:458px">633 kHz</div><div class="t r" style="right:360px;top:474px">633 kHz</div><div class="t r" style="right:357.5px;top:490px">---</div><div class="t r" style="right:359px;top:506px">1</div><div class="t r g" style="right:272px;top:410px">P5:- - -</div><div class="t r g" style="right:184px;top:410px">P6:- - -</div><div class="t r g" style="right:96px;top:410px">P7:- - -</div><div class="t r g" style="right:8px;top:410px">P8:- - -</div>
<div style="position:absolute;left:4px;top:538px;width:97px;height:42px;background:#8b9559;border-top:1px solid #6b7138;border-left:1px solid #6b7138;border-right:1px solid #c9d1a6;border-bottom:1px solid #a3ac78;border-radius:2px;box-sizing:border-box"></div>
<div class="hd" style="left:6px;top:540px;width:93px;background:#ff00ff"></div>
<div class="bt" style="right:703px;top:554px;color:#000">250 mV/div</div>
<div class="bt" style="right:701px;top:567px;color:#000;letter-spacing:0.15px">-790 mV ofst</div>
<div style="position:absolute;left:105px;top:539px;width:96px;height:42px;background:#3a6932;border-top:1px solid #2f5a2a;border-left:1px solid #2f5a2a;border-right:1px solid #5b6a33;border-bottom:1px solid #4f5220;border-radius:2px;box-sizing:border-box"></div>
<div class="hd" style="left:107px;top:541px;width:93px;background:#0036ff"></div>
<div class="bt" style="right:601px;top:540px;color:#fff;letter-spacing:0.3px">track(P2)</div>
<div class="bt" style="right:603px;top:555px;color:#000">100 kHz/div</div>
<div class="bt" style="right:601px;top:568px;color:#000">20.0 µs/div</div>
<div style="position:absolute;left:583px;top:538px;width:112px;height:42px;background:#8b9559;border-top:1px solid #6b7138;border-left:1px solid #6b7138;border-right:1px solid #c9d1a6;border-bottom:1px solid #a3ac78;border-radius:2px;box-sizing:border-box"></div>
<div class="hd" style="left:585px;top:540px;width:108px;background:#000"></div>
<div class="bt" style="left:586px;top:539px;color:#fff">Timebase</div>
<div class="bt" style="right:107px;top:539px;color:#fff;letter-spacing:0.3px">0.0 µs</div>
<div class="bt" style="right:107px;top:554px;color:#000">20.0 µs/div</div>
<div class="bt" style="left:586px;top:567px;color:#000">2.00 MS</div>
<div class="bt" style="right:109px;top:567px;color:#000">10 GS/s</div>
<div style="position:absolute;left:698px;top:538px;width:97px;height:42px;background:#8b9559;border-top:1px solid #6b7138;border-left:1px solid #6b7138;border-right:1px solid #c9d1a6;border-bottom:1px solid #a3ac78;border-radius:2px;box-sizing:border-box"></div>
<div class="hd" style="left:700px;top:540px;width:93px;background:#000"></div>
<div class="bt" style="left:701px;top:539px;color:#fff">Trigger</div>
<div class="bt" style="left:701px;top:554px;color:#000">Stop</div>
<div class="bt" style="right:9px;top:554px;color:#000">975 mV</div>
<div class="bt" style="left:701px;top:567px;color:#000">Edge</div>
<div class="bt" style="right:9px;top:567px;color:#000">Positive</div>
<div style="position:absolute;left:6px;top:582px;width:60px;height:18px;background:#fdfafd"></div>
<div style="position:absolute;left:10px;top:582px;font-size:16px;line-height:18px;font-weight:normal;color:#ffff00;letter-spacing:0.2px;-webkit-text-stroke:0.7px #ffff00">LeCroy</div>
<div style="position:absolute;left:10px;top:597px;width:43px;height:2px;background:#ffff00"></div>
<svg width="800" height="600" style="position:absolute;left:0;top:0" shape-rendering="crispEdges"><rect x="72" y="541" width="26" height="1" fill="#fff"/><rect x="71" y="542" width="28" height="8" fill="#fff"/><rect x="72" y="550" width="26" height="1" fill="#fff"/><rect x="74" y="542" width="1" height="7" fill="#ff00ff"/><rect x="75" y="542" width="2" height="1" fill="#ff00ff"/><rect x="77" y="543" width="1" height="1" fill="#ff00ff"/><rect x="78" y="544" width="1" height="3" fill="#ff00ff"/><rect x="77" y="547" width="1" height="1" fill="#ff00ff"/><rect x="75" y="548" width="2" height="1" fill="#ff00ff"/><rect x="82" y="542" width="3" height="1" fill="#ff00ff"/><rect x="85" y="543" width="1" height="1" fill="#ff00ff"/><rect x="81" y="543" width="1" height="5" fill="#ff00ff"/><rect x="82" y="548" width="3" height="1" fill="#ff00ff"/><rect x="85" y="547" width="1" height="1" fill="#ff00ff"/><rect x="87" y="542" width="4" height="1" fill="#ff00ff"/><rect x="87" y="543" width="1" height="2" fill="#ff00ff"/><rect x="87" y="545" width="3" height="1" fill="#ff00ff"/><rect x="90" y="546" width="1" height="2" fill="#ff00ff"/><rect x="88" y="548" width="2" height="1" fill="#ff00ff"/><rect x="87" y="547" width="1" height="1" fill="#ff00ff"/><rect x="93" y="542" width="2" height="1" fill="#ff00ff"/><rect x="92" y="543" width="1" height="5" fill="#ff00ff"/><rect x="95" y="543" width="1" height="5" fill="#ff00ff"/><rect x="93" y="548" width="2" height="1" fill="#ff00ff"/><rect x="778" y="541" width="13" height="1" fill="#fff"/><rect x="777" y="542" width="15" height="8" fill="#fff"/><rect x="778" y="550" width="13" height="1" fill="#fff"/><rect x="781" y="542" width="3" height="1" fill="#000"/><rect x="784" y="543" width="1" height="1" fill="#000"/><rect x="780" y="543" width="1" height="5" fill="#000"/><rect x="781" y="548" width="3" height="1" fill="#000"/><rect x="784" y="547" width="1" height="1" fill="#000"/><rect x="789" y="542" width="1" height="7" fill="#000"/><rect x="786" y="546" width="5" height="1" fill="#000"/><rect x="788" y="543" width="1" height="1" fill="#000"/><rect x="787" y="544" width="1" height="1" fill="#000"/><rect x="786" y="545" width="1" height="1" fill="#000"/><rect x="9" y="541" width="3" height="1" fill="#fff"/><rect x="8" y="542" width="1" height="1" fill="#fff"/><rect x="12" y="542" width="1" height="1" fill="#fff"/><rect x="7" y="543" width="1" height="4" fill="#fff"/><rect x="8" y="547" width="1" height="1" fill="#fff"/><rect x="12" y="547" width="1" height="1" fill="#fff"/><rect x="9" y="548" width="3" height="1" fill="#fff"/><rect x="17" y="541" width="1" height="8" fill="#fff"/><rect x="16" y="542" width="1" height="1" fill="#fff"/><rect x="15" y="543" width="1" height="2" fill="#fff"/><rect x="14" y="545" width="1" height="1" fill="#fff"/><rect x="14" y="546" width="5" height="1" fill="#fff"/><rect x="108" y="542" width="1" height="8" fill="#fff"/><rect x="109" y="542" width="4" height="1" fill="#fff"/><rect x="109" y="545" width="3" height="1" fill="#fff"/><rect x="116" y="542" width="1" height="8" fill="#fff"/><rect x="115" y="543" width="1" height="1" fill="#fff"/><rect x="114" y="544" width="1" height="1" fill="#fff"/></svg>
<div style="position:absolute;left:658px;top:585px;font-size:12px;line-height:14px;color:#000;letter-spacing:0.1px">10/16/2014 7:04:43 PM</div>
</body></html>
